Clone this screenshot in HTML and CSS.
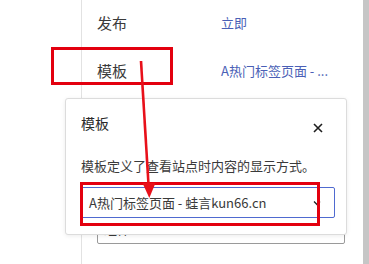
FILE: index.html
```html
<!DOCTYPE html>
<html lang="zh-CN">
  <head>
    <meta charset="utf-8">
    <title>模板</title>
    <link rel="stylesheet" href="styles.css">
  </head>
  <body>
    <div id="page">
      <main id="panel">
        <div class="row">
          <span class="label">发布</span>
          <a class="value">立即</a>
        </div>
        <div class="row">
          <span class="label">模板</span>
          <a class="value">A热门标签页面 - ...</a>
        </div>
        <div class="field">
          <div class="field-input">组件</div>
        </div>
      </main>
      <div id="scrollbar"></div>
    </div>

    <section id="popup">
      <header class="popup-header">
        <h2 class="popup-title">模板</h2>
        <button class="popup-close" type="button" aria-label="关闭">
          <svg width="10" height="10" viewBox="0 0 10 10">
            <path d="M1 1L9 9M9 1L1 9" stroke="#1e1e1e" stroke-width="1.6" fill="none"/>
          </svg>
        </button>
      </header>
      <p class="popup-desc">模板定义了查看站点时内容的显示方式。</p>
      <div class="select">
        <span>A热门标签页面 - 蛙言kun66.cn</span>
        <svg width="8" height="6" viewBox="0 0 8 6">
          <path d="M1 1.5L4 4.5L7 1.5" stroke="#1e1e1e" stroke-width="1.3" fill="none"/>
        </svg>
      </div>
    </section>

    <div class="mark mark-row"></div>
    <div class="mark mark-select"></div>
    <svg id="arrow" width="369" height="264" viewBox="0 0 369 264">
      <line x1="141" y1="61" x2="148.6" y2="186" stroke="#e8101a" stroke-width="2.6"/>
      <polygon points="142.5,183 155.5,183 149.3,198" fill="#e8101a"/>
    </svg>
  </body>
</html>
```

FILE: styles.css
```css
html,
body {
  margin: 0;
  padding: 0;
  height: 100%;
  overflow: hidden;
}
body {
  font-family: "Noto Sans CJK SC", "Noto Sans", sans-serif;
  color: #3a3a3a;
  background-color: #fff;
}
#page {
  display: flex;
  height: 264px;
}
#panel {
  flex: 1;
  margin-left: 81px;
  padding: 0 18px 0 15px;
  border-left: 1px solid #e2e2e2;
}
#scrollbar {
  width: 6px;
  background-color: #c6c6c6;
}
.row {
  display: grid;
  grid-template-columns: 124px 1fr;
  align-items: center;
  height: 48px;
}
.row:first-child {
  margin-top: -2px;
}
.label {
  font-size: 15px;
  color: #3a3a3a;
}
.value {
  font-size: 13px;
  color: #4a5fb6;
  white-space: nowrap;
}
.field {
  margin-top: 119px;
}
.field-input {
  height: 29px;
  line-height: 29px;
  padding-left: 6px;
  font-size: 13px;
  border: 1px solid #9a9a9a;
  border-radius: 2px;
}
#popup {
  position: absolute;
  left: 65px;
  top: 98px;
  width: 249px;
  height: 121px;
  padding: 14px 16px 0 15px;
  background-color: #fff;
  border: 1px solid #dcdcdc;
  border-radius: 3px;
  box-shadow: 0 1px 4px rgba(0, 0, 0, 0.08);
}
.popup-header {
  display: flex;
  justify-content: space-between;
  align-items: flex-start;
}
.popup-title {
  margin: 0;
  font-size: 14px;
  font-weight: normal;
  line-height: 20px;
  color: #2a2a2a;
}
.popup-close {
  display: block;
  margin: 10px 7px 0 0;
  padding: 0;
  width: 10px;
  height: 10px;
  border: 0;
  background: none;
}
.popup-close svg {
  display: block;
}
.popup-desc {
  margin: 23px 0 0;
  font-size: 13px;
  line-height: 20px;
  color: #3a3a3a;
}
.select {
  display: flex;
  align-items: center;
  justify-content: space-between;
  width: 232px;
  height: 29px;
  margin-top: 11px;
  padding: 0 13px 0 7px;
  font-size: 13px;
  color: #3a3a3a;
  border: 1px solid #4f6ad0;
  border-radius: 2px;
  white-space: nowrap;
}
.mark {
  position: absolute;
  border: 3px solid #e3000f;
}
.mark-row {
  left: 51px;
  top: 47px;
  width: 116px;
  height: 32px;
}
.mark-select {
  left: 80px;
  top: 182px;
  width: 234px;
  height: 38px;
}
#arrow {
  position: absolute;
  left: 0;
  top: 0;
  pointer-events: none;
}
```
